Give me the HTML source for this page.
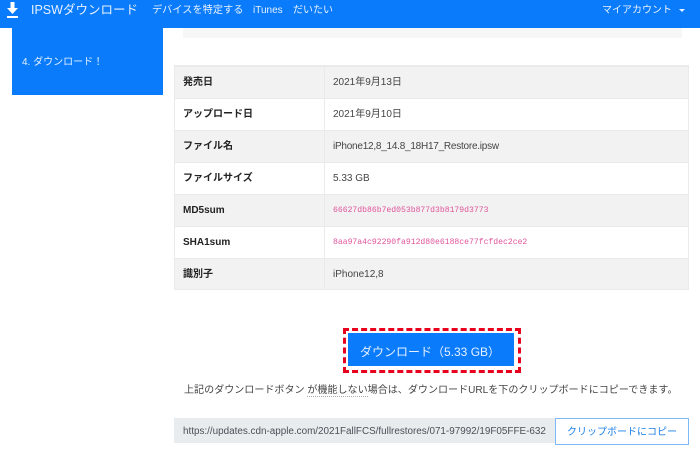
<!DOCTYPE html>
<html lang="ja">
<head>
<meta charset="utf-8">
<style>
html,body{margin:0;padding:0;width:700px;height:454px;overflow:hidden;background:#fff;}
body{position:relative;font-family:"Liberation Sans","Noto Sans CJK JP",sans-serif;color:#333;}
.a{position:absolute;white-space:nowrap;line-height:1;}
.nav{position:absolute;left:0;top:0;width:700px;height:28px;background:#0a7bfb;}
.w{color:#e6f1ff;}
.row{position:absolute;left:174px;width:515px;box-sizing:border-box;border-top:1px solid #e8eaec;}
.g{background:#f2f2f2;}
.th{position:absolute;left:9px;top:-2px;bottom:2px;display:flex;align-items:center;font-size:10px;font-weight:bold;color:#222;white-space:nowrap;}
.td{position:absolute;left:159px;top:-2px;bottom:2px;display:flex;align-items:center;font-size:10px;color:#444;white-space:nowrap;}
.l{top:0;bottom:0;}
.m{font-family:"Liberation Mono",monospace;font-size:8.1px;color:#e0559c;}
.vl{position:absolute;left:324px;top:65px;width:1px;height:225px;background:#e8eaec;}
</style>
</head>
<body>
<div class="nav"></div>
<svg class="a" style="left:5px;top:2px" width="15" height="18" viewBox="0 0 15 18"><path d="M5.500 0h4v6h3.500l-5.500 6-5.500-6h3.500z" fill="#fff"/><rect x="2" y="14" width="11" height="2" fill="#fff"/></svg>
<div class="a w" style="left:31px;top:4px;font-size:12.500px;">IPSWダウンロード</div>
<div class="a w" style="left:152px;top:6px;font-size:10.200px;">デバイスを特定する</div>
<div class="a w" style="left:253px;top:6px;font-size:10px;">iTunes</div>
<div class="a w" style="left:293px;top:6px;font-size:10px;">だいたい</div>
<div class="a w" style="left:602px;top:6px;font-size:10px;">マイアカウント</div>
<div class="a" style="left:679px;top:9px;width:0;height:0;border-left:3px solid transparent;border-right:3px solid transparent;border-top:3px solid #e6f1ff;"></div>

<div class="a" style="left:12px;top:28px;width:151px;height:67px;background:#0a7bfb;"></div>
<div class="a w" style="left:22px;top:58px;font-size:10px;">4. ダウンロード！</div>

<div class="a" style="left:183px;top:28px;width:499px;height:10px;background:#f7f7f7;"></div>

<div class="row g" style="top:65px;height:33px;border-top:2px solid #e8eaec;"><div class="th">発売日</div><div class="td">2021年9月13日</div></div>
<div class="row" style="top:98px;height:32px;"><div class="th">アップロード日</div><div class="td">2021年9月10日</div></div>
<div class="row g" style="top:130px;height:32px;"><div class="th">ファイル名</div><div class="td l" style="letter-spacing:-0.24px;">iPhone12,8_14.8_18H17_Restore.ipsw</div></div>
<div class="row" style="top:162px;height:32px;"><div class="th">ファイルサイズ</div><div class="td l">5.33 GB</div></div>
<div class="row g" style="top:194px;height:32px;"><div class="th l">MD5sum</div><div class="td l m">66627db86b7ed053b877d3b8179d3773</div></div>
<div class="row" style="top:226px;height:32px;"><div class="th l">SHA1sum</div><div class="td l m">8aa97a4c92290fa912d80e6188ce77fcfdec2ce2</div></div>
<div class="row g" style="top:258px;height:32px;border-bottom:1px solid #e8eaec;"><div class="th">識別子</div><div class="td l">iPhone12,8</div></div>
<div class="vl"></div>
<div class="a" style="left:174px;top:65px;width:1px;height:225px;background:#e8eaec;"></div>
<div class="a" style="left:688px;top:65px;width:1px;height:225px;background:#e8eaec;"></div>

<div class="a" style="left:343px;top:328px;width:172px;height:39px;border:3px dashed #e8001c;"></div>
<div class="a" style="left:348px;top:333px;width:166px;height:33px;background:#0a7bfb;"></div>
<div class="a w" style="left:360px;top:346px;font-size:12px;">ダウンロード（5.33 GB）</div>

<div class="a" style="left:184px;top:386px;font-size:10.050px;color:#444;">上記のダウンロードボタン <span style="border-bottom:1px dotted #aaa;">が機能しない</span>場合は、ダウンロードURLを下のクリップボードにコピーできます。</div>

<div class="a" style="left:174px;top:418px;width:381px;height:25px;background:#e9ecef;"></div>
<div class="a" style="left:183px;top:427px;font-size:9.900px;color:#495057;">https://updates.cdn-apple.com/2021FallFCS/fullrestores/071-97992/19F05FFE-632</div>
<div class="a" style="left:555px;top:418px;width:132px;height:25px;border:1px solid #7fb9f5;background:#fff;"></div>
<div class="a" style="left:567px;top:428px;font-size:10px;color:#1a7fe8;">クリップボードにコピー</div>
</body>
</html>
